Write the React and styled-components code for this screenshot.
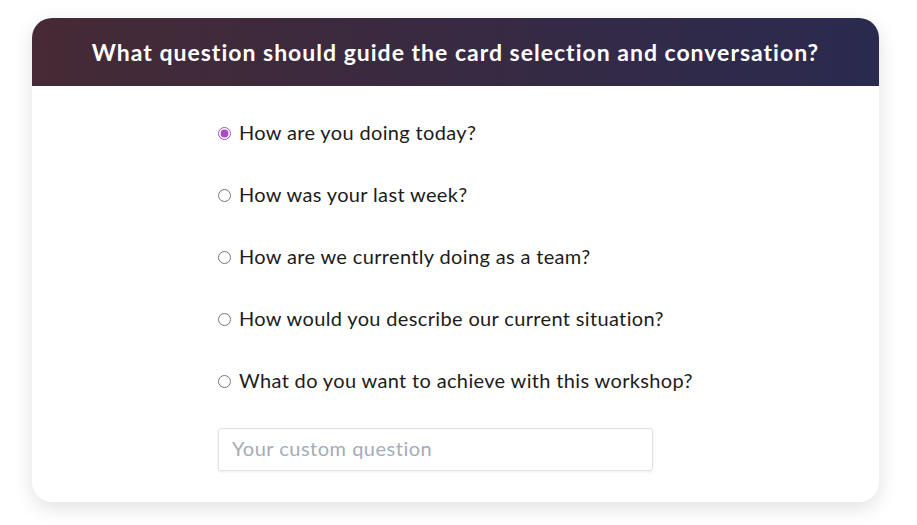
import styled, { createGlobalStyle } from "styled-components";

const GlobalStyle = createGlobalStyle`
  body {
    margin: 0;
    background: #ffffff;
    font-family: 'Lato', 'Noto Sans', sans-serif;
  }
`;

const Page = styled.div`
  padding: 18px 38px 22px 32px;
`;

const Card = styled.div`
  background: #ffffff;
  border-radius: 20px;
  overflow: hidden;
  box-shadow: 0 6px 20px rgba(0, 0, 0, 0.12);
`;

const Header = styled.div`
  height: 68px;
  display: flex;
  align-items: center;
  justify-content: center;
  background: linear-gradient(90deg, #462a35 0%, #2a2a4f 100%);
`;

const Title = styled.h2`
  margin: 0;
  color: #ffffff;
  font-size: 23px;
  font-weight: 700;
  letter-spacing: 1px;
`;

const Body = styled.div`
  padding: 22px 0 31px 186px;
  display: flex;
  flex-direction: column;
  align-items: flex-start;
`;

const Option = styled.label`
  height: 62px;
  display: flex;
  align-items: flex-start;
  gap: 8px;
  padding-top: 12px;
  box-sizing: border-box;
  font-size: 20px;
  letter-spacing: 0.35px;
  color: #1c1c1c;
  cursor: pointer;
`;

const Radio = styled.input`
  width: 13px;
  height: 13px;
  margin: 7px 0 0 0;
  accent-color: #a64ec0;
`;

const CustomInput = styled.input`
  width: 435px;
  height: 43px;
  margin-top: 10px;
  box-sizing: border-box;
  border: 1px solid #dfe3e8;
  border-radius: 3px;
  box-shadow: 0 1px 3px rgba(0, 0, 0, 0.08);
  padding: 0 13px 3px;
  font-family: inherit;
  font-size: 20px;
  letter-spacing: 0.5px;
  color: #333;

  &::placeholder {
    color: #a3acb8;
  }
`;

const questions = [
  "How are you doing today?",
  "How was your last week?",
  "How are we currently doing as a team?",
  "How would you describe our current situation?",
  "What do you want to achieve with this workshop?",
];

export default function App() {
  return (
    <Page>
      <GlobalStyle />
      <Card>
        <Header>
          <Title>What question should guide the card selection and conversation?</Title>
        </Header>
        <Body>
          {questions.map((q, i) => (
            <Option key={q}>
              <Radio type="radio" name="question" defaultChecked={i === 0} />
              {q}
            </Option>
          ))}
          <CustomInput placeholder="Your custom question" />
        </Body>
      </Card>
    </Page>
  );
}
